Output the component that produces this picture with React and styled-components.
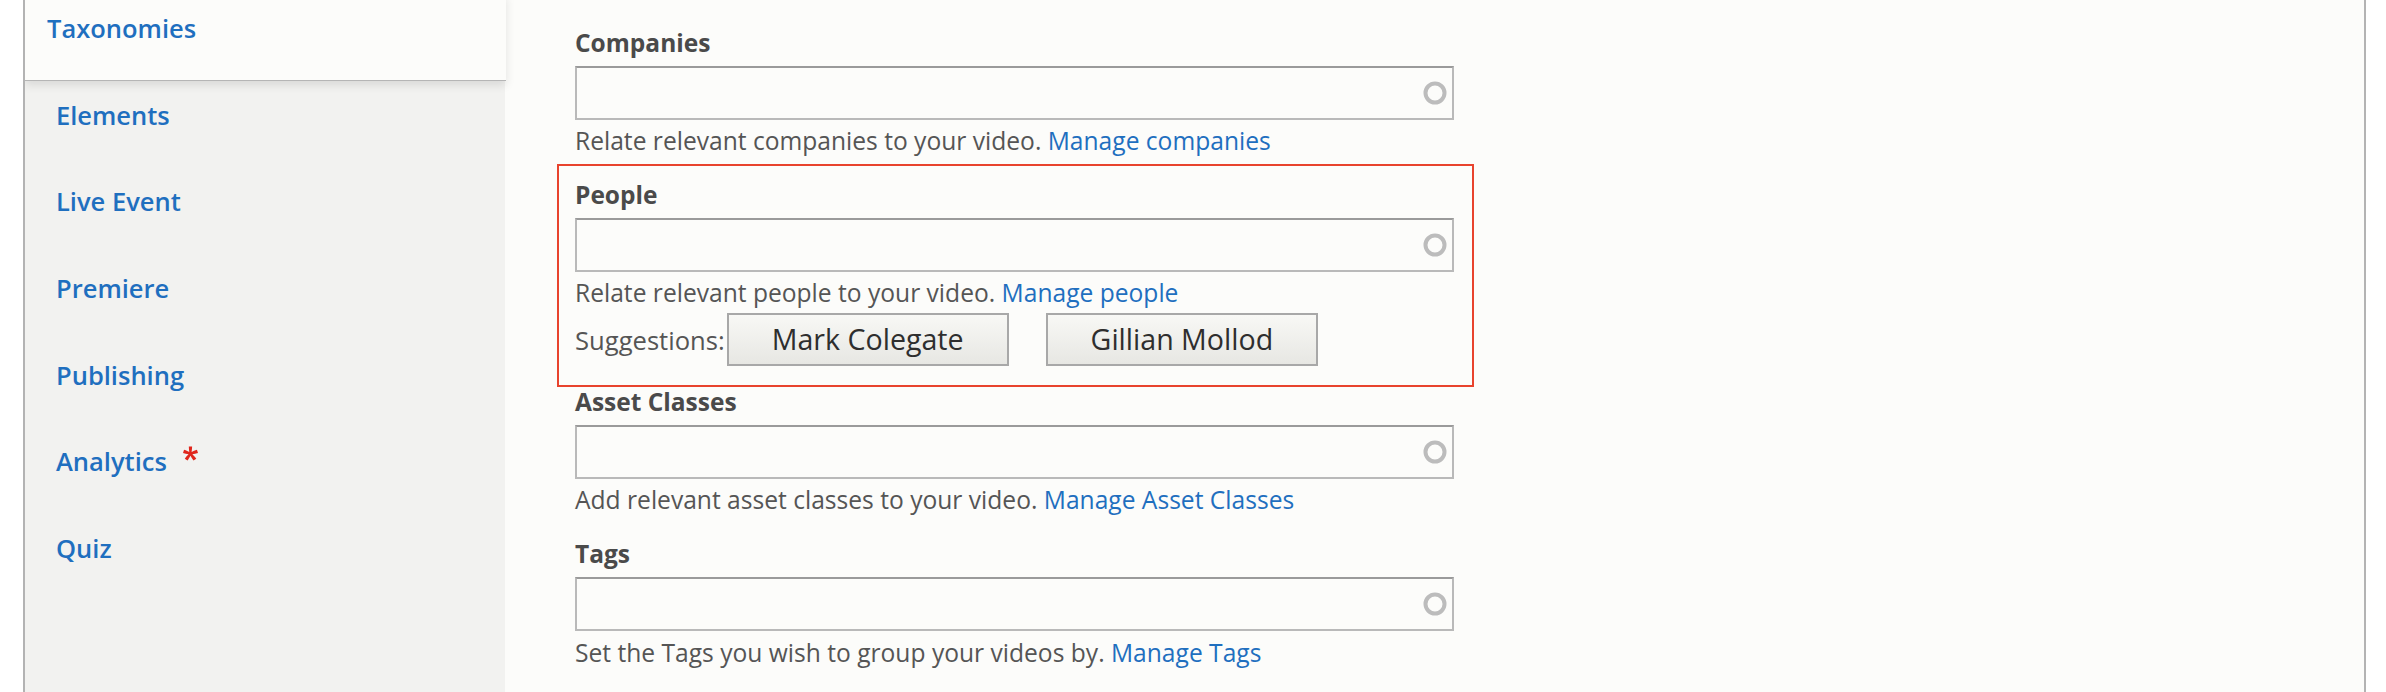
import React from 'react'
import styled, { createGlobalStyle } from 'styled-components'

const GlobalStyle = createGlobalStyle`
    html, body {
        margin: 0;
        padding: 0;
        background: #ffffff;
    }
    body {
        font-family: "Open Sans", "Liberation Sans", sans-serif;
        font-size: 24.5px;
        color: #333;
    }
`

const tabs = [
    { name: 'Taxonomies', selected: true },
    { name: 'Elements' },
    { name: 'Live Event' },
    { name: 'Premiere' },
    { name: 'Publishing' },
    { name: 'Analytics', required: true },
    { name: 'Quiz' },
]

const Throbber = () => (
    <svg width="26" height="26" viewBox="0 0 26 26">
        <circle cx="13" cy="13" r="9.5" fill="none" stroke="#bcbcbc" strokeWidth="4" />
    </svg>
)

const Required = () => (
    <svg width="15" height="15" viewBox="0 0 16 16">
        <path
            fill="#e0261c"
            d="M0,7.562l1.114-3.438c2.565,0.906,4.43,1.688,5.59,2.35C6.398,3.553,6.237,1.544,6.22,0.447h3.511c-0.05,1.597-0.234,3.6-0.558,6.003c1.664-0.838,3.566-1.613,5.714-2.325L16,7.562c-2.05,0.678-4.06,1.131-6.028,1.356c0.984,0.856,2.372,2.381,4.166,4.575l-2.906,2.059c-0.935-1.274-2.041-3.009-3.316-5.206c-1.194,2.275-2.244,4.013-3.147,5.206l-2.856-2.059c1.872-2.307,3.211-3.832,4.017-4.575C3.849,8.516,1.872,8.062,0,7.562"
        />
    </svg>
)

function Field({ label, help, link, gap, children }) {
    return (
        <FieldWrap $gap={gap}>
            <Label>{label}</Label>
            <InputBox>
                <TextInput type="text" />
                <Throbber />
            </InputBox>
            <Help>
                {help} <a href="#">{link}</a>
            </Help>
            {children}
        </FieldWrap>
    )
}

export default function App() {
    return (
        <>
            <GlobalStyle />
            <Frame>
                <Sidebar>
                    <TabList>
                        {tabs.map((t) => (
                            <Tab key={t.name} $selected={t.selected}>
                                <TabLink href="#">{t.name}</TabLink>
                                {t.required && (
                                    <Asterisk>
                                        <Required />
                                    </Asterisk>
                                )}
                            </Tab>
                        ))}
                    </TabList>
                </Sidebar>
                <Main>
                    <Column>
                        <Field
                            label="Companies"
                            help="Relate relevant companies to your video."
                            link="Manage companies"
                            gap={5}
                        />
                        <Highlight>
                            <Field
                                label="People"
                                help="Relate relevant people to your video."
                                link="Manage people"
                                gap={0}
                            >
                                <Suggestions>
                                    Suggestions:
                                    <SuggestButton>Mark Colegate</SuggestButton>
                                    <SuggestButton>Gillian Mollod</SuggestButton>
                                </Suggestions>
                            </Field>
                        </Highlight>
                        <Field
                            label="Asset Classes"
                            help="Add relevant asset classes to your video."
                            link="Manage Asset Classes"
                        />
                        <Field
                            label="Tags"
                            help="Set the Tags you wish to group your videos by."
                            link="Manage Tags"
                        />
                    </Column>
                </Main>
            </Frame>
        </>
    )
}

const Frame = styled.div`
    display: flex;
    margin-left: 23px;
    width: 2343px;
    min-height: 692px;
    box-sizing: border-box;
    border-left: 2px solid #b3b3b3;
    border-right: 2px solid #b3b3b3;
    background: #fcfcfa;
    overflow: hidden;
`

const Sidebar = styled.nav`
    width: 480px;
    flex-shrink: 0;
    background: #f2f2f0;
`

const TabList = styled.ul`
    list-style: none;
    margin: -6px 0 0;
    padding: 0;
`

const Tab = styled.li`
    display: flex;
    align-items: flex-start;
    height: 86.7px;
    box-sizing: border-box;
    padding: 19px 0 0 ${(p) => (p.$selected ? '22px' : '31px')};
    background: ${(p) => (p.$selected ? '#fcfcfa' : 'transparent')};
    border-bottom: ${(p) => (p.$selected ? '1.5px solid #b5b5b5' : 'none')};
    margin-right: ${(p) => (p.$selected ? '-1px' : '0')};
    box-shadow: ${(p) => (p.$selected ? '0 4px 9px rgba(0, 0, 0, 0.11)' : 'none')};
    position: relative;
`

const TabLink = styled.a`
    color: #1f6fbf;
    font-size: 25.5px;
    font-weight: 600;
    line-height: 30px;
    text-decoration: none;
`

const Asterisk = styled.span`
    display: inline-flex;
    margin: 0 0 0 16px;
`

const Main = styled.main`
    flex: 1;
    padding: 27.5px 0 0 70px;
`

const Column = styled.div`
    width: 879px;
`

const FieldWrap = styled.div`
    margin-bottom: ${(p) => (p.$gap ?? 21)}px;
`

const Label = styled.label`
    display: block;
    margin-bottom: 8px;
    line-height: 30px;
    font-weight: 700;
    color: #4a4a4a;
`

const InputBox = styled.div`
    display: flex;
    align-items: center;
    height: 54px;
    box-sizing: border-box;
    padding: 0 4px 0 10px;
    border: 2px solid #b9b9b9;
    border-top-color: #9a9a9a;
    background: #fcfcfa;

    svg {
        flex-shrink: 0;
        filter: blur(0.6px);
    }
`

const TextInput = styled.input`
    flex: 1;
    min-width: 0;
    border: none;
    outline: none;
    background: transparent;
    font: inherit;
    color: #333;
`

const Help = styled.div`
    margin-top: 3.5px;
    line-height: 36px;
    font-size: 24.6px;
    color: #555;

    a {
        color: #1f6fbf;
        text-decoration: none;
    }
`

const Highlight = styled.div`
    margin: 0 -20px 0 -18px;
    padding: 13.5px 18px 19px 16px;
    border: 2px solid #e8432d;
`

const Suggestions = styled.div`
    display: flex;
    align-items: baseline;
    margin-top: 1.5px;
    line-height: 36px;
    font-size: 25.6px;
    color: #555;
`

const SuggestButton = styled.button`
    height: 53px;
    box-sizing: border-box;
    margin-left: 2px;
    padding: 0 43px;
    border: 2px solid #a8a8a8;
    border-radius: 0;
    background: linear-gradient(#f8f8f5, #e7e7e3);
    font-family: "Open Sans", "Liberation Sans", sans-serif;
    font-size: 28.6px;
    font-weight: 500;
    line-height: 38px;
    color: #2e2e2e;

    & + & {
        margin-left: 37px;
    }
`
